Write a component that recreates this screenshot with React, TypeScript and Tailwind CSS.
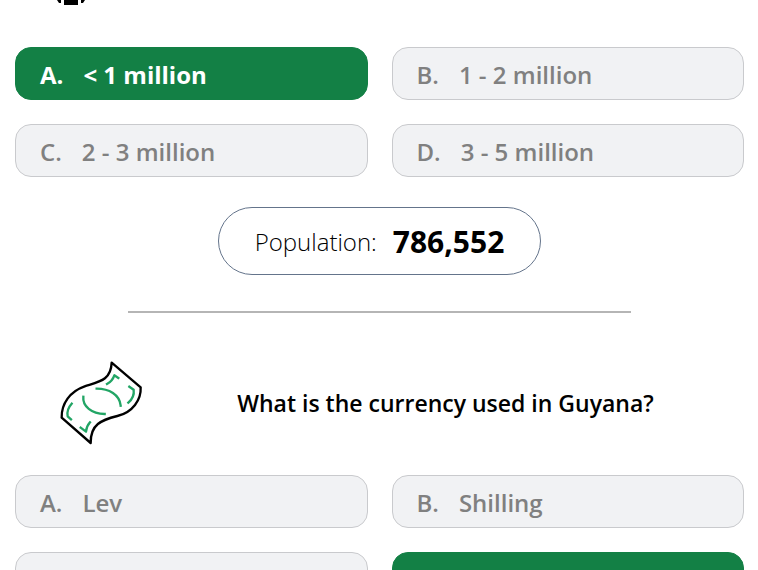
type Choice = { label: string; text: string; correct?: boolean };

const populationChoices: Choice[] = [
  { label: "A.", text: "< 1 million", correct: true },
  { label: "B.", text: "1 - 2 million" },
  { label: "C.", text: "2 - 3 million" },
  { label: "D.", text: "3 - 5 million" },
];

const currencyChoices: Choice[] = [
  { label: "A.", text: "Lev" },
  { label: "B.", text: "Shilling" },
  { label: "C.", text: "Guarani" },
  { label: "D.", text: "Dollar", correct: true },
];

const Choices = ({ choices }: { choices: Choice[] }) => (
  <div className="grid grid-cols-2 gap-6">
    {choices.map((choice) => (
      <button
        key={choice.label}
        type="button"
        className={
          choice.correct
            ? "flex h-[53px] items-center gap-5 rounded-2xl border border-[#138045] bg-[#138045] px-6 pt-0.5 text-2xl font-bold text-white"
            : "flex h-[53px] items-center gap-5 rounded-2xl border border-[#c9cacd] bg-[#f1f2f4] px-6 pt-0.5 text-2xl font-semibold text-[#808080]"
        }
      >
        <span>{choice.label}</span>
        <span>{choice.text}</span>
      </button>
    ))}
  </div>
);

const PeopleIcon = () => (
  <svg viewBox="0 0 28 6" className="h-[6px] w-7" aria-hidden="true">
    <path d="M7 0h14v5H7z" />
    <path d="M0 0h4v3H2zM24 0h4l-2 3h-2z" />
  </svg>
);

const BanknoteIcon = () => (
  <svg
    viewBox="51 39 270 270"
    className="size-[90px] shrink-0"
    fill="none"
    strokeLinecap="round"
    strokeLinejoin="round"
    aria-hidden="true"
  >
    <path
      d="M215 53L302 127C304 164 278 202 232 213C184 225 151 238 152 294L65 218C64 176 90 139 134 124C178 110 213 106 215 53Z"
      stroke="#000"
      strokeWidth="7"
    />
    <g stroke="#22a565" strokeWidth="7" strokeLinecap="square">
      <path d="M170 131C207 131 239 149 242 182" />
      <path d="M130 155C127 184 155 206 194 207" />
      <path d="M235 99L223 91C219 103 212 111 201 117" />
      <path d="M268 125L281 134C283 150 277 163 265 173" />
      <path d="M95 176C84 188 80 200 83 214L93 223" />
      <path d="M122 248L138 260C139 248 143 240 150 232" />
    </g>
  </svg>
);

const App = () => {
  return (
    <main className="h-screen overflow-hidden bg-white pr-[14px] pl-[15px] font-['Open_Sans','Noto_Sans',sans-serif] text-black">
      <header className="h-[47px] pl-[42px]">
        <PeopleIcon />
      </header>
      <Choices choices={populationChoices} />

      <div className="mt-[30px] flex justify-center">
        <p className="flex h-[68px] items-center gap-4 rounded-full border border-[#64748b] px-9 pt-0.5">
          <span className="text-2xl font-light">Population:</span>
          <strong className="text-3xl font-bold">786,552</strong>
        </p>
      </div>

      <hr className="mx-auto mt-9 w-[69%] border-t-2 border-[#b5b5b5]" />

      <section>
        <div className="mt-[45px] mb-[27px] flex items-center pl-[42px]">
          <BanknoteIcon />
          <h2 className="flex-1 text-center text-[23px] font-semibold">
            What is the currency used in Guyana?
          </h2>
        </div>
        <Choices choices={currencyChoices} />
      </section>
    </main>
  );
};

export default App;
